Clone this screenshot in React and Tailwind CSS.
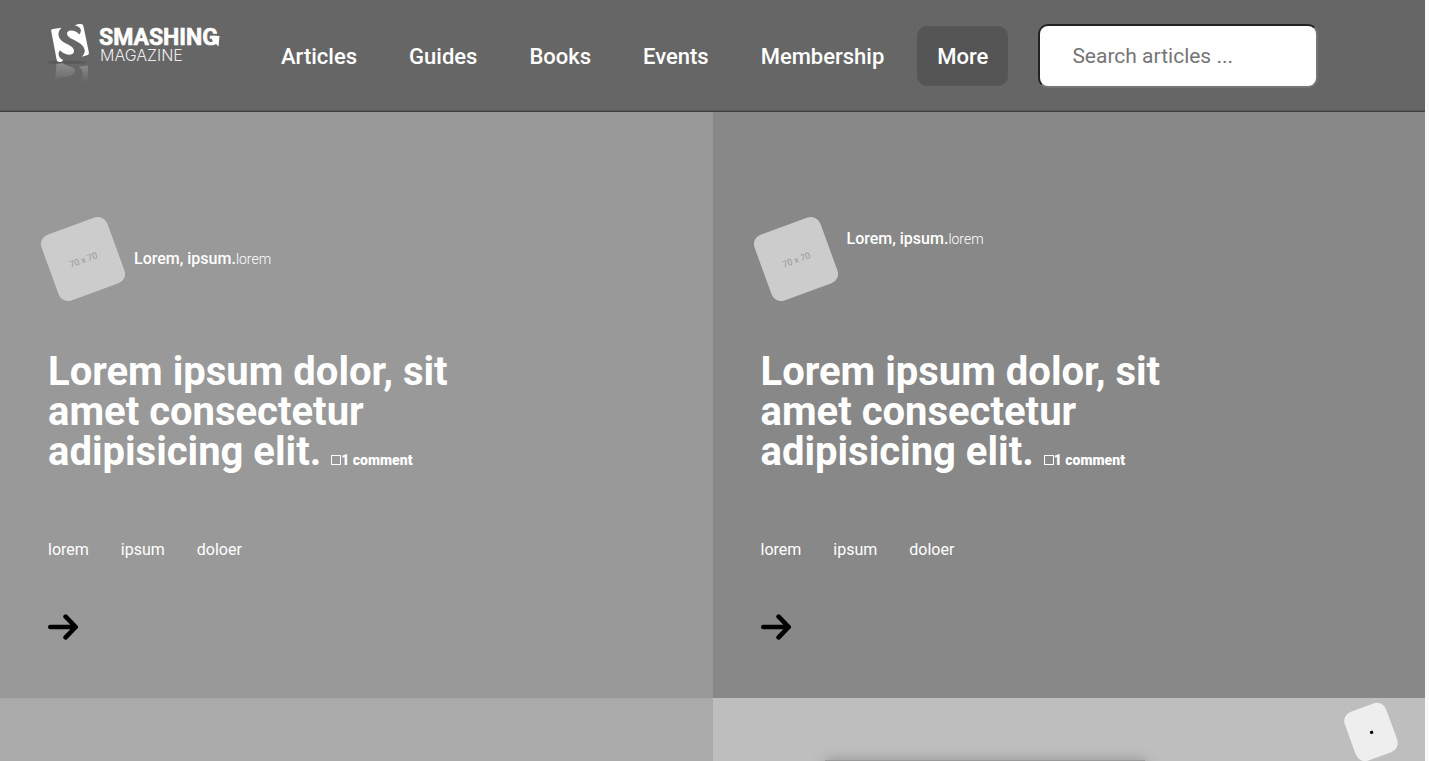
const NAV_LINKS = ["Articles", "Guides", "Books", "Events", "Membership"];
const TAGS = ["lorem", "ipsum", "doloer"];

function Logo() {
  return (
    <a href="#" aria-label="Smashing Magazine" className="block h-16 shrink-0">
      <svg width="175" height="64" viewBox="48 24 175 64" fill="white" aria-hidden="true">
        <defs>
          <linearGradient id="fade" x1="0" y1="62" x2="0" y2="82" gradientUnits="userSpaceOnUse">
            <stop offset="0" stopColor="white" stopOpacity="0.28" />
            <stop offset="1" stopColor="white" stopOpacity="0" />
          </linearGradient>
        </defs>
        <ellipse cx="67" cy="62.3" rx="20" ry="1.8" fill="#5a5a5a" />
        <path d="M51.3 31.5 C50.9 30 51.5 29.2 53 28.9 L61.5 27.8 C57.6 31.2 57.4 37 61.4 40.6 C65.2 44 71.5 45.2 73.4 48.8 C75 52.2 73 54.9 69 54.7 C65.3 54.5 62.2 52.6 60 50.2 C57.4 53 58.4 57.7 62.4 59.6 C63.6 60.4 63 61.5 60.5 61.9 C57.8 62.3 57 61.2 56.5 59 Z" />
        <path d="M74.8 25.6 C77.2 24.1 80 23.8 81.8 24.2 C83 24.5 83.2 25.4 83.5 26.6 L88.8 52 C89.2 54 88.6 54.8 87 55.3 L81.5 56.8 C85.4 53.8 85.8 49 82.3 45.4 C78.2 41.2 69.6 39 67.6 35.6 C66.2 32.8 67.6 30.8 70.8 30.6 C74 30.5 77.4 32.2 79.4 34.4 C82.2 31 81.2 26.8 74.8 25.6 Z" />
        <path fill="url(#fade)" d="M56.500 63.800 L63 63 C66 67 74.500 65.500 75 70.500 C74 76 66 78 60.500 77 L55 82 Z M79 66.500 L88 65.500 L88 82 L82 82 C83.500 76 83 70 79 66.500 Z" />
        <text x="99" y="45" className="[font-family:Roboto,sans-serif] text-[23px] font-bold" stroke="white" strokeWidth="0.6">SMASHING</text>
        <path d="M212 36 L219.500 36 L218.500 46.500 L215 43 L212 40 Z" />
        <text x="100" y="61" className="[font-family:Inter,sans-serif] text-[16px] font-light" fillOpacity="0.9">MAGAZINE</text>
      </svg>
    </a>
  );
}

function Arrow() {
  return (
    <svg width="30" height="26" viewBox="0 0 30 26" fill="none" stroke="black" strokeWidth="4.6" strokeLinecap="round" strokeLinejoin="round" aria-hidden="true">
      <path d="M2.300 13H27M17.600 2.600 27.700 13 17.600 23.400" />
    </svg>
  );
}

function Article({ className, authorAlign }) {
  return (
    <article className={"px-12 pt-28 pb-[58px] text-white " + className}>
      <div className="flex h-[70px] gap-4">
        <div className="flex size-[70px] shrink-0 -rotate-20 items-center justify-center rounded-[10px] bg-[#ccc] pt-1 text-[9px] text-[#969696]">
          70 x 70
        </div>
        <p className={"text-base " + authorAlign}>
          <span className="font-medium">Lorem, ipsum.</span>
          <span className="text-sm font-light">lorem</span>
        </p>
      </div>
      <h2 className="mt-[58px] max-w-[420px] text-[40px]/10 font-bold">
        Lorem ipsum dolor, sit amet consectetur adipisicing elit.{" "}
        <a href="#" className="text-sm/4 font-black">
          <span className="inline-block size-[10px] border border-white" aria-hidden="true" />1 comment
        </a>
      </h2>
      <ul className="mt-[66px] flex gap-8 text-base">
        {TAGS.map((tag) => (
          <li key={tag}>
            <a href="#">{tag}</a>
          </li>
        ))}
      </ul>
      <a href="#" aria-label="Read article" className="mt-[52px] block w-fit">
        <Arrow />
      </a>
    </article>
  );
}

export default function App() {
  return (
    <div className="flex h-screen flex-col overflow-hidden border-r-4 border-[#fafafa] [font-family:Roboto,sans-serif]">
      <header className="flex h-28 shrink-0 items-center bg-[#666] pl-12 text-[22px] text-white shadow-[inset_0_-3px_2px_-2px_#333]">
        <Logo />
        <nav className="ml-8 flex items-center">
          {NAV_LINKS.map((label) => (
            <a key={label} href="#" className="px-[26px] font-medium">
              {label}
            </a>
          ))}
          <button type="button" className="ml-[7px] h-15 rounded-[10px] bg-[#555] px-5 font-medium">
            More
          </button>
        </nav>
        <input
          type="search"
          aria-label="Search articles"
          placeholder="Search articles ..."
          className="ml-[30px] h-16 w-[280px] rounded-[10px] border-2 border-t-[#222] border-r-[#767676] border-b-[#767676] border-l-[#222] bg-white px-8 text-[21px] text-black placeholder:text-[#757575]"
        />
      </header>
      <main className="grid min-h-0 flex-1 grid-cols-2 grid-rows-[auto_1fr]">
        <Article className="bg-[#999]" authorAlign="self-center" />
        <Article className="bg-[#888]" authorAlign="mt-[3px] self-start" />
        <section className="bg-[#aaa]" />
        <section className="relative overflow-hidden bg-[#bebebe] pt-[62px]">
          <div className="ml-28 h-80 w-80 bg-[#999] shadow-[0_2px_14px_rgba(0,0,0,0.3)]" />
          <button
            type="button"
            aria-label="Menu"
            className="absolute top-2 right-8 flex h-13 w-11 -rotate-20 items-center justify-center rounded-[10px] bg-[#eee]"
          >
            <span className="size-[3px] bg-black" />
          </button>
        </section>
      </main>
    </div>
  );
}
